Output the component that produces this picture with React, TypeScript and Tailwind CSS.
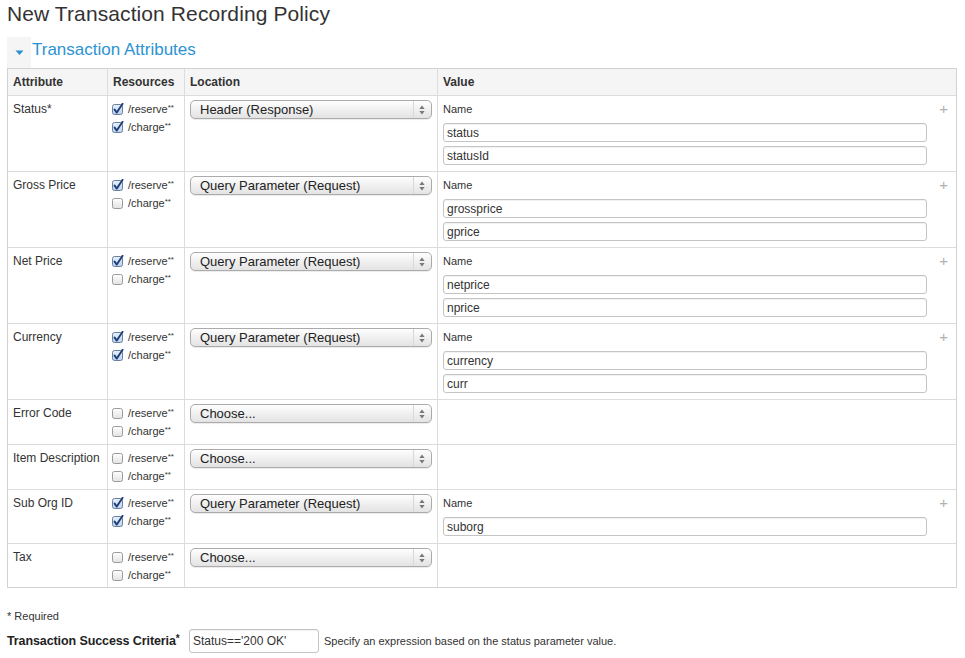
import React from "react";

type Row = {
  name: string;
  req?: boolean;
  reserve: boolean;
  charge: boolean;
  location: string;
  values: string[];
  h: string;
};

const rows: Row[] = [
  { name: "Status", req: true, reserve: true, charge: true, location: "Header (Response)", values: ["status", "statusId"], h: "h-[76px]" },
  { name: "Gross Price", reserve: true, charge: false, location: "Query Parameter (Request)", values: ["grossprice", "gprice"], h: "h-[76px]" },
  { name: "Net Price", reserve: true, charge: false, location: "Query Parameter (Request)", values: ["netprice", "nprice"], h: "h-[76px]" },
  { name: "Currency", reserve: true, charge: true, location: "Query Parameter (Request)", values: ["currency", "curr"], h: "h-[76px]" },
  { name: "Error Code", reserve: false, charge: false, location: "Choose...", values: [], h: "h-[45px]" },
  { name: "Item Description", reserve: false, charge: false, location: "Choose...", values: [], h: "h-[45px]" },
  { name: "Sub Org ID", reserve: true, charge: true, location: "Query Parameter (Request)", values: ["suborg"], h: "h-[54px]" },
  { name: "Tax", reserve: false, charge: false, location: "Choose...", values: [], h: "h-[44px]" },
];

function Check({ on }: { on: boolean }) {
  return (
    <svg width="13" height="13" viewBox="0 0 13 13" className="shrink-0">
      <defs>
        <linearGradient id="cbOff" x1="0" y1="0" x2="0" y2="1">
          <stop offset="0" stopColor="#ffffff" />
          <stop offset="1" stopColor="#e2e2e2" />
        </linearGradient>
        <linearGradient id="cbOn" x1="0" y1="0" x2="0" y2="1">
          <stop offset="0" stopColor="#e8f1fb" />
          <stop offset="1" stopColor="#bcd3ee" />
        </linearGradient>
      </defs>
      <rect x="1.5" y="1.5" width="10" height="10" rx="2" fill={on ? "url(#cbOn)" : "url(#cbOff)"} stroke={on ? "#6a7f9c" : "#9a9a9a"} strokeWidth="1" />
      {on && (
        <path d="M3.6 6.6 L5.8 9.6 L11.6 0.8" fill="none" stroke="#1f3f78" strokeWidth="1.9" strokeLinecap="round" strokeLinejoin="round" />
      )}
    </svg>
  );
}

function Res({ label, on }: { label: string; on: boolean }) {
  return (
    <div className="flex items-center gap-[4px] h-[18px]">
      <Check on={on} />
      <span className="text-[11px] text-[#333]">
        {label}
        <span className="text-[8px] relative -top-[3px]">**</span>
      </span>
    </div>
  );
}

function Select({ value }: { value: string }) {
  return (
    <div className="relative h-[19px] w-[242px] rounded-[5px] border border-[#ababab] bg-gradient-to-b from-[#fefefe] via-[#f0f0f0] to-[#e3e3e3] shadow-[0_1px_1px_rgba(0,0,0,0.08)] flex items-center pl-[9px]">
      <span className="text-[13px] text-[#222] leading-none">{value}</span>
      <div className="absolute right-[6px] top-0 bottom-0 flex items-center border-l border-[#d8d8d8] pl-[5px]">
        <svg width="6" height="10" viewBox="0 0 6 10">
          <path d="M3 0.5 L5.6 4 L0.4 4 Z" fill="#777" />
          <path d="M3 9.5 L5.6 6 L0.4 6 Z" fill="#777" />
        </svg>
      </div>
    </div>
  );
}

export default function App() {
  return (
    <div className="w-[965px] h-[658px] bg-white overflow-hidden font-['Liberation_Sans',Arial,sans-serif] text-[#333]">
      <div className="pl-[7px] pt-[2px]">
        <h1 className="text-[21px] leading-[24px] text-[#333] tracking-[0.1px]">New Transaction Recording Policy</h1>
      </div>
      <div className="flex items-stretch mt-[11px] ml-[7px] h-[31px]">
        <div className="w-[24px] bg-[#f5f5f5] flex items-center justify-center">
          <svg width="9" height="6" viewBox="0 0 9 6" className="mt-[1px]">
            <path d="M0.5 0.5 L8.5 0.5 L4.5 5 Z" fill="#2a8fd0" />
          </svg>
        </div>
        <div className="pl-[1px] pt-[3px] text-[17px] leading-[20px] text-[#2b93d4]">Transaction Attributes</div>
      </div>
      <div className="ml-[7px] w-[950px] border border-[#d2d2d2]">
        <div className="grid grid-cols-[99px_77px_253px_1fr] h-[26px] bg-[#f5f5f5] text-[12px] font-bold text-[#333]">
          <div className="pl-[5px] flex items-center">Attribute</div>
          <div className="pl-[5px] flex items-center border-l border-[#dcdcdc]">Resources</div>
          <div className="pl-[5px] flex items-center border-l border-[#dcdcdc]">Location</div>
          <div className="pl-[5px] flex items-center border-l border-[#dcdcdc]">Value</div>
        </div>
        {rows.map((r) => (
          <div key={r.name} className={`grid grid-cols-[99px_77px_253px_1fr] border-t border-[#dcdcdc] ${r.h}`}>
            <div className="pl-[5px] pt-[6px] text-[12px] leading-[15px] text-[#333]">
              {r.name}
              {r.req ? "*" : ""}
            </div>
            <div className="border-l border-[#dcdcdc] pl-[3px] pt-[4px]">
              <Res label="/reserve" on={r.reserve} />
              <Res label="/charge" on={r.charge} />
            </div>
            <div className="border-l border-[#dcdcdc] pl-[5px] pt-[4px]">
              <Select value={r.location} />
            </div>
            <div className="border-l border-[#dcdcdc] relative">
              {r.values.length > 0 && (
                <>
                  <div className="pl-[5px] pt-[6px] text-[11px] leading-[14px] text-[#333]">Name</div>
                  <div className="absolute right-[8px] top-[5px] text-[15px] leading-[15px] text-[#b0b0b0] font-light">+</div>
                  <div className="pl-[5px] pt-[7px] flex flex-col gap-[4px]">
                    {r.values.map((v) => (
                      <div key={v} className="w-[484px] h-[19px] rounded-[3px] border border-[#c4c4c4] shadow-[inset_0_1px_1px_rgba(0,0,0,0.06)] flex items-center pl-[3px] text-[12px] text-[#333]">
                        {v}
                      </div>
                    ))}
                  </div>
                </>
              )}
            </div>
          </div>
        ))}
      </div>
      <div className="pl-[7px] pt-[21px] text-[11px] leading-[14px] text-[#333]">* Required</div>
      <div className="flex items-center pl-[7px] pt-[6px]">
        <div className="w-[182px] whitespace-nowrap text-[12.5px] tracking-[-0.1px] font-bold text-[#222]">
          Transaction Success Criteria<span className="text-[10px] relative -top-[3px]">*</span>
        </div>
        <div className="w-[130px] h-[24px] rounded-[3px] border border-[#c4c4c4] shadow-[inset_0_1px_1px_rgba(0,0,0,0.06)] flex items-center pl-[3px] text-[12px] text-[#333]">
          Status=='200 OK'
        </div>
        <div className="pl-[5px] text-[11px] text-[#333] whitespace-nowrap">Specify an expression based on the status parameter value.</div>
      </div>
    </div>
  );
}
